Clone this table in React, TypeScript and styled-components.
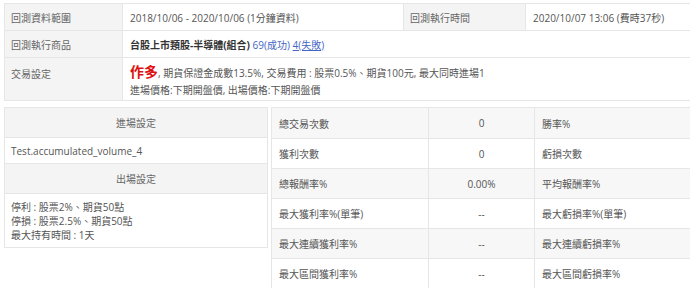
import React from 'react';
import styled, {createGlobalStyle} from 'styled-components';

const GlobalStyle = createGlobalStyle`
  body {
    margin: 0;
    background: #fff;
    overflow: hidden;
    font-family: 'Open Sans', 'Noto Sans CJK TC', sans-serif;
    font-size: 10px;
    color: #555;
  }
`

const summary = [
    {label: '總交易次數', value: '0', label2: '勝率%'},
    {label: '獲利次數', value: '0', label2: '虧損次數'},
    {label: '總報酬率%', value: '0.00%', label2: '平均報酬率%'},
    {label: '最大獲利率%(單筆)', value: '--', label2: '最大虧損率%(單筆)'},
    {label: '最大連續獲利率%', value: '--', label2: '最大連續虧損率%'},
    {label: '最大區間獲利率%', value: '--', label2: '最大區間虧損率%'},
];

export default function App() {
    return (
        <>
            <GlobalStyle/>
            <Page>
                <InfoTable>
                    <colgroup>
                        <col style={{width: 118}}/>
                        <col style={{width: 281}}/>
                        <col style={{width: 122}}/>
                        <col/>
                    </colgroup>
                    <tbody>
                    <InfoRow $height={27}>
                        <LabelCell>回測資料範圍</LabelCell>
                        <ValueCell>2018/10/06 - 2020/10/06 (1分鐘資料)</ValueCell>
                        <LabelCell>回測執行時間</LabelCell>
                        <ValueCell>2020/10/07 13:06 (費時37秒)</ValueCell>
                    </InfoRow>
                    <InfoRow $height={27}>
                        <LabelCell>回測執行商品</LabelCell>
                        <ValueCell colSpan={3}>
                            <Strong>台股上市類股-半導體(組合)</Strong>{' '}
                            <Link>69(成功)</Link>{' '}
                            <Link $underline>4(失敗)</Link>
                        </ValueCell>
                    </InfoRow>
                    <InfoRow $height={43}>
                        <LabelCell $top>交易設定</LabelCell>
                        <ValueCell colSpan={3} $top>
                            <Line $height={17}><Side>作多</Side>, 期貨保證金成數13.5%, 交易費用 : 股票0.5%、期貨100元, 最大同時進場1</Line>
                            <Line $height={16}>進場價格:下期開盤價, 出場價格:下期開盤價</Line>
                        </ValueCell>
                    </InfoRow>
                    </tbody>
                </InfoTable>

                <Lower>
                    <SettingsPanel>
                        <PanelHeader>進場設定</PanelHeader>
                        <PanelBody $height={26}>Test.accumulated_volume_4</PanelBody>
                        <PanelHeader>出場設定</PanelHeader>
                        <PanelBody $height={53} $padTop={6}>
                            <Line>停利 : 股票2%、期貨50點</Line>
                            <Line>停損 : 股票2.5%、期貨50點</Line>
                            <Line>最大持有時間 : 1天</Line>
                        </PanelBody>
                    </SettingsPanel>

                    <StatsTable>
                        <colgroup>
                            <col style={{width: 157}}/>
                            <col style={{width: 106}}/>
                            <col/>
                        </colgroup>
                        <tbody>
                        {summary.map((r, i) => (
                            <StatsRow key={r.label} $striped={i % 2 === 0} $height={i === 0 ? 31 : 30}>
                                <StatsCell>{r.label}</StatsCell>
                                <StatsCell $center>{r.value}</StatsCell>
                                <StatsCell>{r.label2}</StatsCell>
                            </StatsRow>
                        ))}
                        </tbody>
                    </StatsTable>
                </Lower>
            </Page>
        </>
    );
}

const Page = styled.div`
  width: 688px;
  padding: 3px 0 0 4px;
  display: flex;
  flex-direction: column;
  gap: 6px;
`

const InfoTable = styled.table`
  width: 100%;
  border-collapse: collapse;
  table-layout: fixed;
  border: 1px solid #e6e6e6;
`

const InfoRow = styled.tr<{ $height: number }>`
  height: ${p => p.$height}px;
`

const LabelCell = styled.td<{ $top?: boolean }>`
  background: #f4f4f4;
  color: #666;
  border: 1px solid #e6e6e6;
  padding: ${p => p.$top ? '8px 6px 0' : '0 6px'};
  vertical-align: ${p => p.$top ? 'top' : 'middle'};
  white-space: nowrap;
`

const ValueCell = styled.td<{ $top?: boolean }>`
  background: #fff;
  border: 1px solid #e6e6e6;
  padding: ${p => p.$top ? '5px 7px 0' : '0 7px'};
  vertical-align: ${p => p.$top ? 'top' : 'middle'};
  white-space: nowrap;
`

const Strong = styled.span`
  font-weight: bold;
  color: #333;
`

const Link = styled.span<{ $underline?: boolean }>`
  color: #4466c4;
  text-decoration: ${p => p.$underline ? 'underline' : 'none'};
`

const Side = styled.span`
  color: #dd1111;
  font-weight: bold;
  font-size: 14px;
`

const Line = styled.div<{ $height?: number }>`
  line-height: ${p => p.$height ?? 14}px;
  white-space: nowrap;
`

const Lower = styled.div`
  display: flex;
  gap: 3px;
  align-items: flex-start;
`

const SettingsPanel = styled.div`
  width: 264px;
  flex: none;
  display: flex;
  flex-direction: column;
  border: 1px solid #e6e6e6;
  box-sizing: border-box;
`

const PanelHeader = styled.div`
  height: 30px;
  display: flex;
  align-items: center;
  justify-content: center;
  background: #f4f4f4;
  border-bottom: 1px solid #e6e6e6;
  color: #666;
  box-sizing: border-box;
`

const PanelBody = styled.div<{ $height: number; $padTop?: number }>`
  height: ${p => p.$height}px;
  box-sizing: border-box;
  padding: ${p => p.$padTop ? `${p.$padTop}px 6px 0` : '0 6px'};
  display: flex;
  flex-direction: column;
  justify-content: ${p => p.$padTop ? 'flex-start' : 'center'};
  border-bottom: 1px solid #e6e6e6;
  &:last-child {
    border-bottom: none;
  }
`

const StatsTable = styled.table`
  flex: 1;
  border-collapse: collapse;
  table-layout: fixed;
  border: 1px solid #e6e6e6;
`

const StatsRow = styled.tr<{ $striped: boolean; $height: number }>`
  height: ${p => p.$height}px;
  background: ${p => p.$striped ? '#f7f7f7' : '#fff'};
`

const StatsCell = styled.td<{ $center?: boolean }>`
  border: 1px solid #e6e6e6;
  padding: 0 7px;
  text-align: ${p => p.$center ? 'center' : 'left'};
  white-space: nowrap;
`
